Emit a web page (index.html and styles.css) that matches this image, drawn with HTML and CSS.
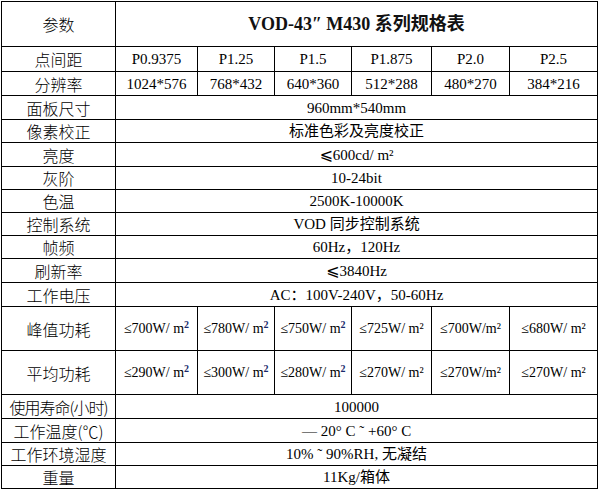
FILE: index.html
```html
<!DOCTYPE html>
<html lang="zh-CN">
<head>
<meta charset="utf-8">
<title>VOD-43″ M430 系列规格表</title>
<link rel="stylesheet" href="styles.css">
</head>
<body>
<table class="spec">
  <colgroup>
    <col class="c0"><col class="c1"><col class="c2"><col class="c3"><col class="c4"><col class="c5"><col class="c6">
  </colgroup>
  <tr class="h45"><td class="lbl">参数</td><td colspan="6" class="title">VOD-43″ M430 系列规格表</td></tr>
  <tr class="h25"><td class="lbl">点间距</td><td>P0.9375</td><td>P1.25</td><td>P1.5</td><td>P1.875</td><td>P2.0</td><td>P2.5</td></tr>
  <tr class="h24"><td class="lbl">分辨率</td><td>1024*576</td><td>768*432</td><td>640*360</td><td>512*288</td><td>480*270</td><td>384*216</td></tr>
  <tr class="h24"><td class="lbl">面板尺寸</td><td colspan="6">960mm*540mm</td></tr>
  <tr class="h23"><td class="lbl">像素校正</td><td colspan="6">标准色彩及亮度校正</td></tr>
  <tr class="h24"><td class="lbl">亮度</td><td colspan="6"><span class="le">⩽</span>600cd/ m²</td></tr>
  <tr class="h23"><td class="lbl">灰阶</td><td colspan="6">10-24bit</td></tr>
  <tr class="h23"><td class="lbl">色温</td><td colspan="6">2500K-10000K</td></tr>
  <tr class="h23"><td class="lbl">控制系统</td><td colspan="6">VOD 同步控制系统</td></tr>
  <tr class="h23"><td class="lbl">帧频</td><td colspan="6">60Hz，120Hz</td></tr>
  <tr class="h24"><td class="lbl">刷新率</td><td colspan="6"><span class="le">⩽</span>3840Hz</td></tr>
  <tr class="h24"><td class="lbl">工作电压</td><td colspan="6">AC：100V-240V，50-60Hz</td></tr>
  <tr class="h44"><td class="lbl">峰值功耗</td><td class="pw">≤700W/ m<sup class="b">2</sup></td><td class="pw">≤780W/ m<sup class="b">2</sup></td><td class="pw">≤750W/ m<sup class="b">2</sup></td><td class="pw">≤725W/ m²</td><td class="pw">≤700W/m²</td><td class="pw">≤680W/ m²</td></tr>
  <tr class="h44"><td class="lbl">平均功耗</td><td class="pw">≤290W/ m<sup class="b">2</sup></td><td class="pw">≤300W/ m<sup class="b">2</sup></td><td class="pw">≤280W/ m<sup class="b">2</sup></td><td class="pw">≤270W/ m²</td><td class="pw">≤270W/m²</td><td class="pw">≤270W/ m²</td></tr>
  <tr class="h24"><td class="lbl tight">使用寿命(小时)</td><td colspan="6">100000</td></tr>
  <tr class="h24"><td class="lbl">工作温度(℃)</td><td colspan="6">— 20° C ˜ +60° C</td></tr>
  <tr class="h23"><td class="lbl">工作环境湿度</td><td colspan="6">10% ˜ 90%RH, 无凝结</td></tr>
  <tr class="h23"><td class="lbl">重量</td><td colspan="6">11Kg/箱体</td></tr>
</table>
</body>
</html>
```

FILE: styles.css
```css
html, body {
  margin: 0;
  padding: 0;
  background: #ffffff;
}
body {
  padding: 1px 0 0 1px;
}
.spec {
  border-collapse: collapse;
  table-layout: fixed;
  width: 597px;
  font-family: "Liberation Serif", "Noto Sans CJK SC", serif;
  font-size: 15px;
  color: #000;
}
.c0 { width: 114px; }
.c1 { width: 82px; }
.c2 { width: 77px; }
.c3 { width: 77px; }
.c4 { width: 80px; }
.c5 { width: 78px; }
.c6 { width: 88px; }
.spec td {
  border: 1px solid #000;
  padding: 0;
  text-align: center;
  vertical-align: middle;
  line-height: 18px;
  white-space: nowrap;
  overflow: hidden;
}
.spec td.lbl {
  font-family: "Noto Sans CJK SC", sans-serif;
  font-size: 16px;
  font-weight: 300;
}
.spec td.tight {
  letter-spacing: -1px;
}
.spec td.title {
  font-family: "Liberation Serif", "Noto Sans CJK SC", serif;
  font-weight: bold;
  font-size: 18px;
  color: #111;
}
.le {
  font-family: "DejaVu Sans", sans-serif;
  font-size: 16px;
}
.spec td.pw {
  font-size: 14px;
}
sup.b {
  font-size: 10px;
  font-weight: bold;
  color: #1a2a6a;
  line-height: 0;
  vertical-align: 5px;
}
.h45 { height: 45px; }
.h44 { height: 44px; }
.h25 { height: 25px; }
.h24 { height: 24px; }
.h23 { height: 23px; }
```
